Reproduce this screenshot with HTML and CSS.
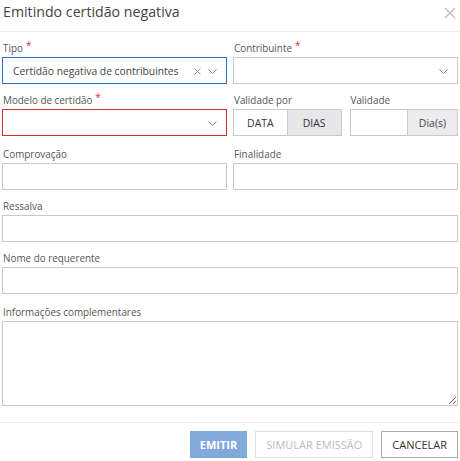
FILE: index.html
```html
<!DOCTYPE html>
<html lang="pt-BR">
<head>
<meta charset="utf-8">
<title>Emitindo certidão negativa</title>
<link rel="stylesheet" href="styles.css">
</head>
<body>
<div class="modal">
  <div class="modal-header">
    <h1 class="modal-title">Emitindo certidão negativa</h1>
    <button class="close" aria-label="Fechar">
      <svg width="12" height="12" viewBox="0 0 12 12"><path d="M1 1L11 11M11 1L1 11" stroke="#bdbdbd" stroke-width="1.4" fill="none"/></svg>
    </button>
  </div>
  <div class="modal-body">
    <div class="row two">
      <div class="field">
        <label class="label">Tipo<span class="req">*</span></label>
        <div class="control select focused">
          <span class="value">Certidão negativa de contribuintes</span>
          <span class="clear"><svg width="7" height="7" viewBox="0 0 7 7"><path d="M0.5 0.5L6.5 6.5M6.5 0.5L0.5 6.5" stroke="#999" stroke-width="1" fill="none"/></svg></span>
          <span class="caret"><svg width="9" height="5" viewBox="0 0 9 5"><path d="M0.5 0.5L4.5 4.5L8.5 0.5" stroke="#888" stroke-width="1" fill="none"/></svg></span>
        </div>
      </div>
      <div class="field">
        <label class="label">Contribuinte<span class="req">*</span></label>
        <div class="control select">
          <span class="value"></span>
          <span class="caret"><svg width="9" height="5" viewBox="0 0 9 5"><path d="M0.5 0.5L4.5 4.5L8.5 0.5" stroke="#888" stroke-width="1" fill="none"/></svg></span>
        </div>
      </div>
    </div>
    <div class="row two row-gap">
      <div class="field">
        <label class="label">Modelo de certidão<span class="req">*</span></label>
        <div class="control select invalid">
          <span class="value"></span>
          <span class="caret"><svg width="9" height="5" viewBox="0 0 9 5"><path d="M0.5 0.5L4.5 4.5L8.5 0.5" stroke="#888" stroke-width="1" fill="none"/></svg></span>
        </div>
      </div>
      <div class="split">
        <div class="field">
          <label class="label">Validade por</label>
          <div class="toggle">
            <button class="opt">DATA</button>
            <button class="opt active">DIAS</button>
          </div>
        </div>
        <div class="field">
          <label class="label">Validade</label>
          <div class="group">
            <input class="group-input" type="text">
            <span class="addon">Dia(s)</span>
          </div>
        </div>
      </div>
    </div>
    <div class="row two">
      <div class="field">
        <label class="label">Comprovação</label>
        <input class="control" type="text">
      </div>
      <div class="field">
        <label class="label">Finalidade</label>
        <input class="control" type="text">
      </div>
    </div>
    <div class="row">
      <div class="field">
        <label class="label">Ressalva</label>
        <input class="control" type="text">
      </div>
    </div>
    <div class="row">
      <div class="field">
        <label class="label">Nome do requerente</label>
        <input class="control" type="text">
      </div>
    </div>
    <div class="row last">
      <div class="field">
        <label class="label">Informações complementares</label>
        <textarea class="control area"></textarea>
      </div>
    </div>
  </div>
  <div class="modal-footer">
    <button class="btn primary">EMITIR</button>
    <button class="btn disabled">SIMULAR EMISSÃO</button>
    <button class="btn">CANCELAR</button>
  </div>
</div>
</body>
</html>
```

FILE: styles.css
```css
* { box-sizing: border-box; }
html, body { margin: 0; padding: 0; background: #fff; }
body { font-family: "Open Sans", "Noto Sans", sans-serif; color: #444; }

.modal { width: 460px; }

.modal-header {
  height: 32px;
  border-bottom: 1px solid #eeeeee;
  display: flex;
  align-items: flex-start;
  justify-content: space-between;
  padding: 0 3px 0 3px;
}
.modal-title {
  margin: 0;
  font-size: 14.2px;
  font-weight: 400;
  line-height: 22px;
  color: #444;
  padding-top: 1px;
}
.close {
  border: 0;
  background: none;
  padding: 0;
  margin-top: 7px;
  margin-right: 1px;
  width: 12px;
  height: 12px;
  display: flex;
}

.modal-body { padding: 11px 2px 0 2px; }

.row { margin-bottom: 11px; }
.row-gap { margin-bottom: 13px; }
.row.last { margin-top: 13px; margin-bottom: 0; }
.two { display: grid; grid-template-columns: 1fr 1fr; column-gap: 6px; }
.split { display: grid; grid-template-columns: 1fr 1fr; column-gap: 8px; }

.field { display: flex; flex-direction: column; min-width: 0; }
.label {
  font-size: 9.9px;
  line-height: 10px;
  height: 14px;
  padding-bottom: 4px;
  color: #555;
  padding-left: 1px;
  white-space: nowrap;
}
.req {
  color: #d9312b;
  margin-left: 3px;
  font-size: 10px;
  line-height: 0;
  position: relative;
  top: -3px;
}

.control {
  height: 27px;
  width: 100%;
  border: 1px solid #c9c9c9;
  background: #fff;
  font-family: inherit;
  font-size: 10.3px;
  color: #444;
  padding: 0 10px;
  outline: none;
  margin: 0;
}
.select { display: flex; align-items: center; }
.select .value { flex: 1; white-space: nowrap; overflow: hidden; }
.select.focused { border-color: #2f70c4; }
.select.invalid { border-color: #d6302b; }
.clear { display: flex; margin-right: 7px; margin-top: 1px; }
.caret { display: flex; margin-right: -1px; margin-top: 2px; }

.toggle { display: flex; height: 27px; border: 1px solid #c9c9c9; }
.opt {
  flex: 1;
  border: 0;
  background: #fff;
  font-family: inherit;
  font-size: 10.5px;
  color: #333;
  padding: 0;
}
.opt.active { background: #e7e7e9; border-left: 1px solid #c9c9c9; }

.group { display: flex; height: 27px; border: 1px solid #c9c9c9; }
.group-input { flex: 1; min-width: 0; border: 0; outline: none; padding: 0 6px; }
.addon {
  width: 50px;
  background: #ececee;
  border-left: 1px solid #c9c9c9;
  display: flex;
  align-items: center;
  justify-content: center;
  font-size: 10.5px;
  color: #444;
}

.area { height: 85px; resize: vertical; padding: 6px 10px; display: block; }

.modal-footer {
  margin-top: 16px;
  border-top: 1px solid #eeeeee;
  padding: 8px 2px 0 2px;
  display: flex;
  justify-content: flex-end;
  gap: 8px;
}
.btn {
  height: 27px;
  border: 1px solid #a9a9a9;
  background: #fff;
  font-family: inherit;
  font-size: 11px;
  color: #333;
  padding: 0 10px;
}
.btn.primary {
  background: #80aadc;
  border-color: #80aadc;
  color: #fff;
  font-weight: 700;
  padding: 0 9px;
}
.btn.disabled { color: #bcbcbc; border-color: #dddddd; }
```
